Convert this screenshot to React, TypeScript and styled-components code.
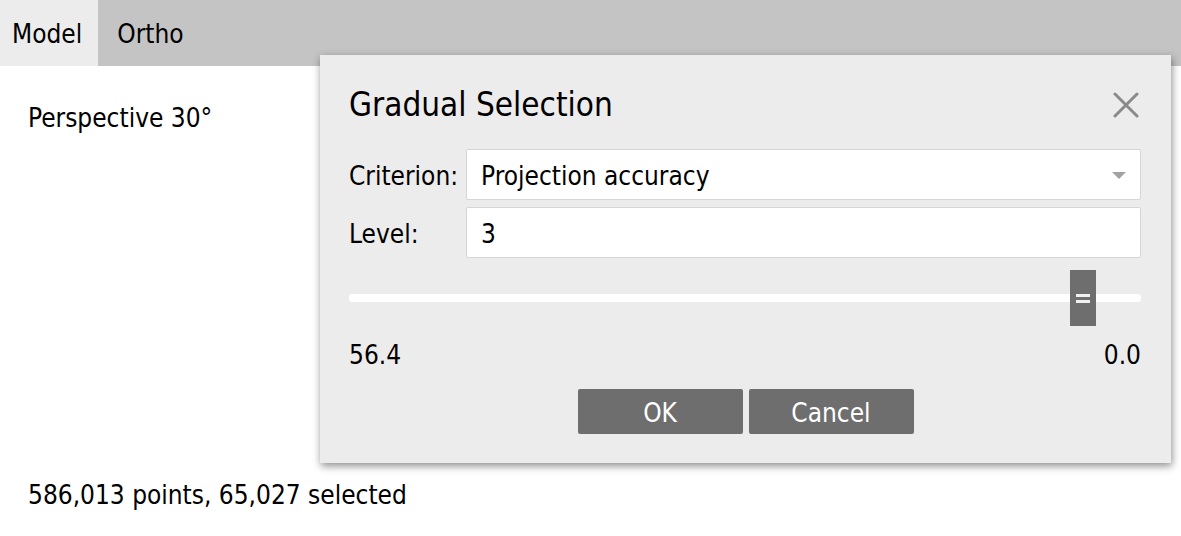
import React from "react";
import styled, { createGlobalStyle } from "styled-components";

const Global = createGlobalStyle`
  html, body { margin: 0; padding: 0; background: #ffffff; }
  body {
    font-family: "DejaVu Sans Condensed", "DejaVu Sans", "Liberation Sans", sans-serif;
    color: #000;
    -webkit-font-smoothing: antialiased;
  }
  * { box-sizing: border-box; }
`;

const Page = styled.div`
  position: relative;
  width: 1181px;
  height: 536px;
  overflow: hidden;
  display: flex;
  flex-direction: column;
`;

const TopBar = styled.div`
  height: 66px;
  background: #c4c4c4;
  display: flex;
  align-items: stretch;
`;

const Tab = styled.div<{ $active?: boolean }>`
  display: flex;
  align-items: center;
  padding: 2px ${(p) => (p.$active ? "16px" : "19px")} 0 ${(p) => (p.$active ? "12px" : "19px")};
  background: ${(p) => (p.$active ? "#ececec" : "transparent")};
  font-size: 26px;
  line-height: 30px;
`;

const Main = styled.div`
  flex: 1;
  display: flex;
  flex-direction: column;
  justify-content: space-between;
  padding: 37px 28px 26px;
`;

const Caption = styled.div`
  font-size: 26px;
  line-height: 30px;
`;

const Dialog = styled.div`
  position: absolute;
  left: 320px;
  top: 55px;
  width: 851px;
  height: 408px;
  background: #ececec;
  box-shadow: 1px 3px 8px rgba(0, 0, 0, 0.45);
  padding: 30px 30px 29px 29px;
  display: flex;
  flex-direction: column;
`;

const TitleRow = styled.div`
  display: flex;
  align-items: center;
  justify-content: space-between;
  height: 40px;
`;

const Title = styled.div`
  font-size: 33px;
  line-height: 40px;
`;

const CloseButton = styled.button`
  border: none;
  background: transparent;
  padding: 0;
  margin-right: 2px;
  width: 26px;
  height: 26px;
  display: flex;
  align-items: center;
  justify-content: center;
  cursor: pointer;
`;

const FormRow = styled.div<{ $top: number }>`
  display: grid;
  grid-template-columns: 117px 1fr;
  align-items: center;
  margin-top: ${(p) => p.$top}px;
`;

const Label = styled.div`
  font-size: 26px;
  line-height: 30px;
  padding-top: 2px;
`;

const Field = styled.div`
  position: relative;
  height: 51px;
  background: #ffffff;
  border: 1px solid #d6d6d6;
  border-radius: 2px;
  display: flex;
  align-items: center;
  padding: 2px 14px 0;
  font-size: 26px;
`;

const Caret = styled.span`
  position: absolute;
  right: 14px;
  top: 22px;
  width: 0;
  height: 0;
  border-left: 7px solid transparent;
  border-right: 7px solid transparent;
  border-top: 7px solid #a2a2a2;
`;

const SliderBox = styled.div`
  position: relative;
  height: 56px;
  margin-top: 12px;
  display: flex;
  align-items: center;
`;

const Track = styled.div`
  width: 100%;
  height: 8px;
  background: #ffffff;
  border-radius: 3px;
`;

const Thumb = styled.div`
  position: absolute;
  top: 0;
  width: 26px;
  height: 56px;
  background: #6e6e6e;
  display: flex;
  flex-direction: column;
  align-items: center;
  justify-content: center;
  gap: 3px;
`;

const Grip = styled.span`
  width: 14px;
  height: 3px;
  background: #f0f0f0;
`;

const Values = styled.div`
  display: flex;
  justify-content: space-between;
  margin-top: 14px;
  font-size: 26px;
  line-height: 30px;
`;

const Buttons = styled.div`
  display: flex;
  justify-content: center;
  gap: 6px;
  margin-top: 19px;
  padding-left: 1px;
`;

const Button = styled.button`
  width: 165px;
  height: 45px;
  border: none;
  border-radius: 2px;
  background: #6e6e6e;
  color: #ffffff;
  font-family: inherit;
  font-size: 26px;
  padding: 2px 0 0;
  cursor: pointer;
`;

export default function App() {
  const min = 0.0;
  const max = 56.4;
  const level = 3.32;
  const frac = (max - level) / (max - min);
  return (
    <>
      <Global />
      <Page>
        <TopBar>
          <Tab $active>Model</Tab>
          <Tab>Ortho</Tab>
        </TopBar>
        <Main>
          <Caption>Perspective 30°</Caption>
          <Caption>586,013 points, 65,027 selected</Caption>
        </Main>
        <Dialog>
          <TitleRow>
            <Title>Gradual Selection</Title>
            <CloseButton aria-label="Close">
              <svg width="26" height="26" viewBox="0 0 26 26">
                <path d="M2 2 L24 24 M24 2 L2 24" stroke="#8a8a8a" strokeWidth="3" strokeLinecap="round" />
              </svg>
            </CloseButton>
          </TitleRow>
          <FormRow $top={24}>
            <Label>Criterion:</Label>
            <Field>
              Projection accuracy
              <Caret />
            </Field>
          </FormRow>
          <FormRow $top={7}>
            <Label>Level:</Label>
            <Field>3</Field>
          </FormRow>
          <SliderBox>
            <Track />
            <Thumb style={{ left: `calc((100% - 26px) * ${frac.toFixed(4)})` }}>
              <Grip />
              <Grip />
            </Thumb>
          </SliderBox>
          <Values>
            <span>56.4</span>
            <span>0.0</span>
          </Values>
          <Buttons>
            <Button>OK</Button>
            <Button>Cancel</Button>
          </Buttons>
        </Dialog>
      </Page>
    </>
  );
}
